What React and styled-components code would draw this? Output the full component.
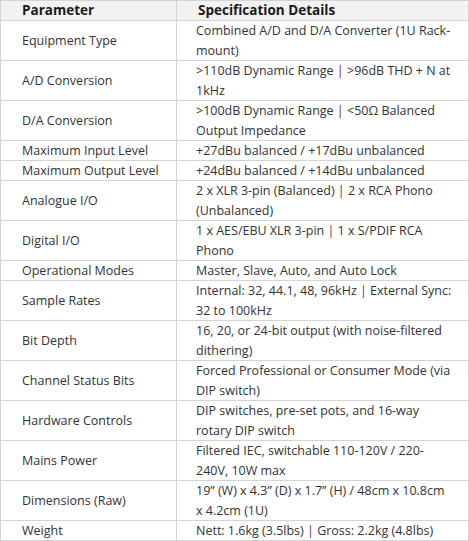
import React from "react";
import styled, { createGlobalStyle } from "styled-components";

const GlobalStyle = createGlobalStyle`
  html, body {
    margin: 0;
    padding: 0;
    background: #ffffff;
  }
  body {
    font-family: "Open Sans", "Liberation Sans", sans-serif;
  }
`;

const specs = [
  { name: "Equipment Type", lines: [["Combined A/D and D/A Converter (1U Rack-"], ["mount)"]] },
  { name: "A/D Conversion", lines: [[">110dB Dynamic Range ", "|", " >96dB THD + N at"], ["1kHz"]] },
  { name: "D/A Conversion", lines: [[">100dB Dynamic Range ", "|", " <50Ω Balanced"], ["Output Impedance"]] },
  { name: "Maximum Input Level", lines: [["+27dBu balanced / +17dBu unbalanced"]] },
  { name: "Maximum Output Level", lines: [["+24dBu balanced / +14dBu unbalanced"]] },
  { name: "Analogue I/O", lines: [["2 x XLR 3-pin (Balanced) ", "|", " 2 x RCA Phono"], ["(Unbalanced)"]] },
  { name: "Digital I/O", lines: [["1 x AES/EBU XLR 3-pin ", "|", " 1 x S/PDIF RCA"], ["Phono"]] },
  { name: "Operational Modes", lines: [["Master, Slave, Auto, and Auto Lock"]] },
  { name: "Sample Rates", lines: [["Internal: 32, 44.1, 48, 96kHz ", "|", " External Sync:"], ["32 to 100kHz"]] },
  { name: "Bit Depth", lines: [["16, 20, or 24-bit output (with noise-filtered"], ["dithering)"]] },
  { name: "Channel Status Bits", lines: [["Forced Professional or Consumer Mode (via"], ["DIP switch)"]] },
  { name: "Hardware Controls", lines: [["DIP switches, pre-set pots, and 16-way"], ["rotary DIP switch"]] },
  { name: "Mains Power", lines: [["Filtered IEC, switchable 110-120V / 220-"], ["240V, 10W max"]] },
  { name: "Dimensions (Raw)", lines: [["19\u201D (W) x 4.3\u201D (D) x 1.7\u201D (H) / 48cm x 10.8cm"], ["x 4.2cm (1U)"]] },
  { name: "Weight", lines: [["Nett: 1.6kg (3.5lbs) ", "|", " Gross: 2.2kg (4.8lbs)"]] },
];

const Table = styled.table`
  width: 468px;
  border-collapse: collapse;
  table-layout: fixed;
  color: #333333;
  font-size: 12.5px;
`;

const HeadCell = styled.th`
  background: #f2f2f2;
  border: 1px solid #d4d4d4;
  font-weight: 700;
  font-size: 13.5px;
  text-align: left;
  padding: 0 0 0 21px;
  height: 19px;
  line-height: 19px;
  color: #1a1a1a;
`;

const Cell = styled.td`
  border: 1px solid #d4d4d4;
  padding: 0 0 0 ${(p) => (p.$first ? 21 : 19)}px;
  height: ${(p) => p.$lines * 20 - 1}px;
  line-height: ${(p) => (p.$lines > 1 ? 19.5 : 19)}px;
  vertical-align: middle;
  white-space: nowrap;
`;

const Line = styled.div`
  display: block;
`;

const Pipe = styled.span`
  color: #8a1a3a;
`;

export default function App() {
  return (
    <>
      <GlobalStyle />
      <Table>
        <colgroup>
          <col style={{ width: 176 }} />
          <col style={{ width: 292 }} />
        </colgroup>
        <thead>
          <tr>
            <HeadCell>Parameter</HeadCell>
            <HeadCell>Specification Details</HeadCell>
          </tr>
        </thead>
        <tbody>
          {specs.map((row) => (
            <tr key={row.name}>
              <Cell $first $lines={row.lines.length}>{row.name}</Cell>
              <Cell $lines={row.lines.length}>
                {row.lines.map((parts, i) => (
                  <Line key={i}>
                    {parts.map((p, j) => (p === "|" ? <Pipe key={j}>|</Pipe> : <span key={j}>{p}</span>))}
                  </Line>
                ))}
              </Cell>
            </tr>
          ))}
        </tbody>
      </Table>
    </>
  );
}
